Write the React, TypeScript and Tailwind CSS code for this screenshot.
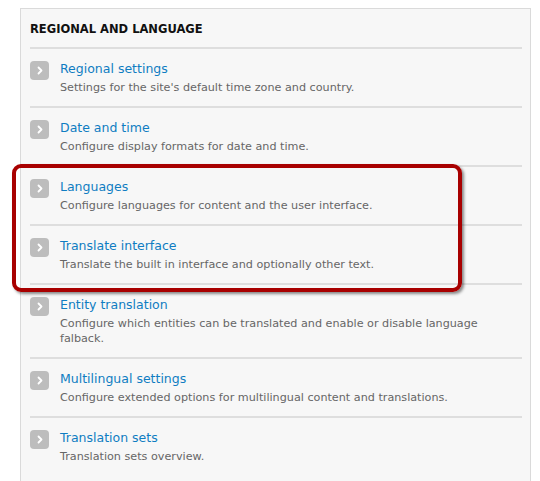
import React from "react";

const items = [
  { t: "Regional settings", d: ["Settings for the site's default time zone and country."] },
  { t: "Date and time", d: ["Configure display formats for date and time."] },
  { t: "Languages", d: ["Configure languages for content and the user interface."] },
  { t: "Translate interface", d: ["Translate the built in interface and optionally other text."] },
  {
    t: "Entity translation",
    d: ["Configure which entities can be translated and enable or disable language", "falback."],
  },
  { t: "Multilingual settings", d: ["Configure extended options for multilingual content and translations."] },
  { t: "Translation sets", d: ["Translation sets overview."] },
];

function Chevron() {
  return (
    <div className="w-[19px] h-[19px] rounded-[4px] bg-[#bdbdbd] flex items-center justify-center shrink-0">
      <svg width="8" height="9" viewBox="0 0 8 9">
        <path d="M2.5 1.5 L5.5 4.5 L2.5 7.5" stroke="#fff" strokeWidth="1.8" fill="none" strokeLinecap="round" strokeLinejoin="round" />
      </svg>
    </div>
  );
}

export default function App() {
  return (
    <div
      className="relative w-[540px] h-[481px] bg-white overflow-hidden pt-[8px] pl-[20px] pr-[9px]"
      style={{ fontFamily: '"DejaVu Sans", Verdana, sans-serif' }}
    >
      <div className="h-full border border-b-0 border-[#dadada] bg-[#f7f7f7] pl-[9px] pr-[8px]">
        <div className="pt-[12px] pb-[10px] text-[11.5px] leading-[16px] font-bold text-[#111]">
          REGIONAL AND LANGUAGE
        </div>
        {items.map((it) => (
          <div key={it.t} className="border-t-2 border-[#dedede] flex gap-[11px] pt-[11px] pb-[11px]">
            <div className="pt-[1px]">
              <Chevron />
            </div>
            <div className="flex flex-col">
              <div className="text-[12.5px] leading-[18px] text-[#0f7dc2]">{it.t}</div>
              <div className="mt-[2px] text-[11.2px] leading-[15px] text-[#666]">
                {it.d.map((l) => (
                  <div key={l}>{l}</div>
                ))}
              </div>
            </div>
          </div>
        ))}
      </div>
      <div className="absolute left-[12px] top-[164px] w-[450px] h-[128px] border-[4px] border-[#a80000] rounded-[9px] shadow-[2px_2px_3px_rgba(0,0,0,0.45)]" />
    </div>
  );
}
